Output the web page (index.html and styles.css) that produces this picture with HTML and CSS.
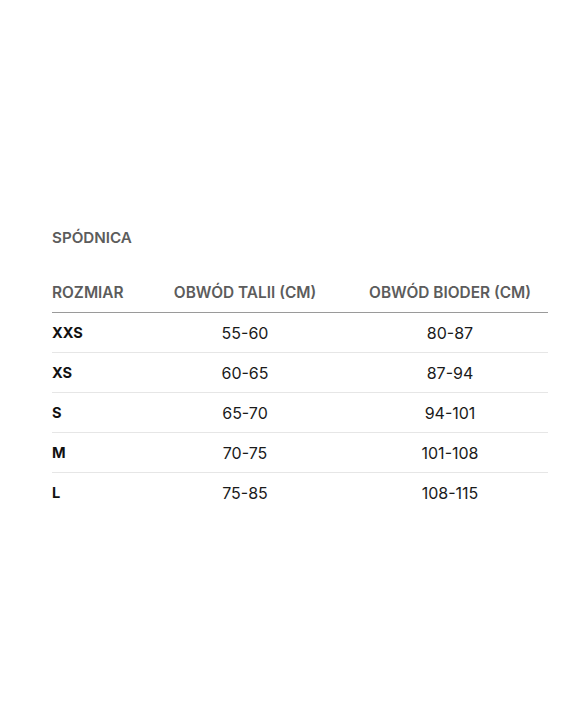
FILE: index.html
```html
<!DOCTYPE html>
<html lang="pl">
<head>
<meta charset="utf-8">
<link rel="stylesheet" href="styles.css">
</head>
<body>
<div class="page">
  <h2 class="title">SPÓDNICA</h2>
  <div class="table">
    <div class="row head">
      <div class="c1">ROZMIAR</div>
      <div class="c2">OBWÓD TALII (CM)</div>
      <div class="c3">OBWÓD BIODER (CM)</div>
    </div>
    <div class="row"><div class="c1 size">XXS</div><div class="c2">55-60</div><div class="c3">80-87</div></div>
    <div class="row"><div class="c1 size">XS</div><div class="c2">60-65</div><div class="c3">87-94</div></div>
    <div class="row"><div class="c1 size">S</div><div class="c2">65-70</div><div class="c3">94-101</div></div>
    <div class="row"><div class="c1 size">M</div><div class="c2">70-75</div><div class="c3">101-108</div></div>
    <div class="row last"><div class="c1 size">L</div><div class="c2">75-85</div><div class="c3">108-115</div></div>
  </div>
</div>
</body>
</html>
```
FILE: styles.css
```css
html, body { margin: 0; padding: 0; background: #fff; }
body { font-family: "Inter", "Lato", sans-serif; color: #1a1a1a; }
.page { padding: 228px 37px 0 52px; }
.title {
  margin: 0;
  font-size: 15.2px;
  font-weight: 600;
  color: #5c5c5c;
  line-height: 20px;
}
.table { margin-top: 25px; }
.row {
  display: grid;
  grid-template-columns: 86px 214px 196px;
  height: 39px;
  align-items: center;
  border-bottom: 1px solid #e6e6e6;
  font-size: 16px;
}
.row.head {
  border-bottom: 1px solid #9a9a9a;
  color: #5c5c5c;
  font-weight: 600;
  font-size: 15.4px;
}
.row.last { border-bottom: none; }
.c2, .c3 { text-align: center; }
.size { font-weight: 700; color: #111; font-size: 14.6px; }
```
